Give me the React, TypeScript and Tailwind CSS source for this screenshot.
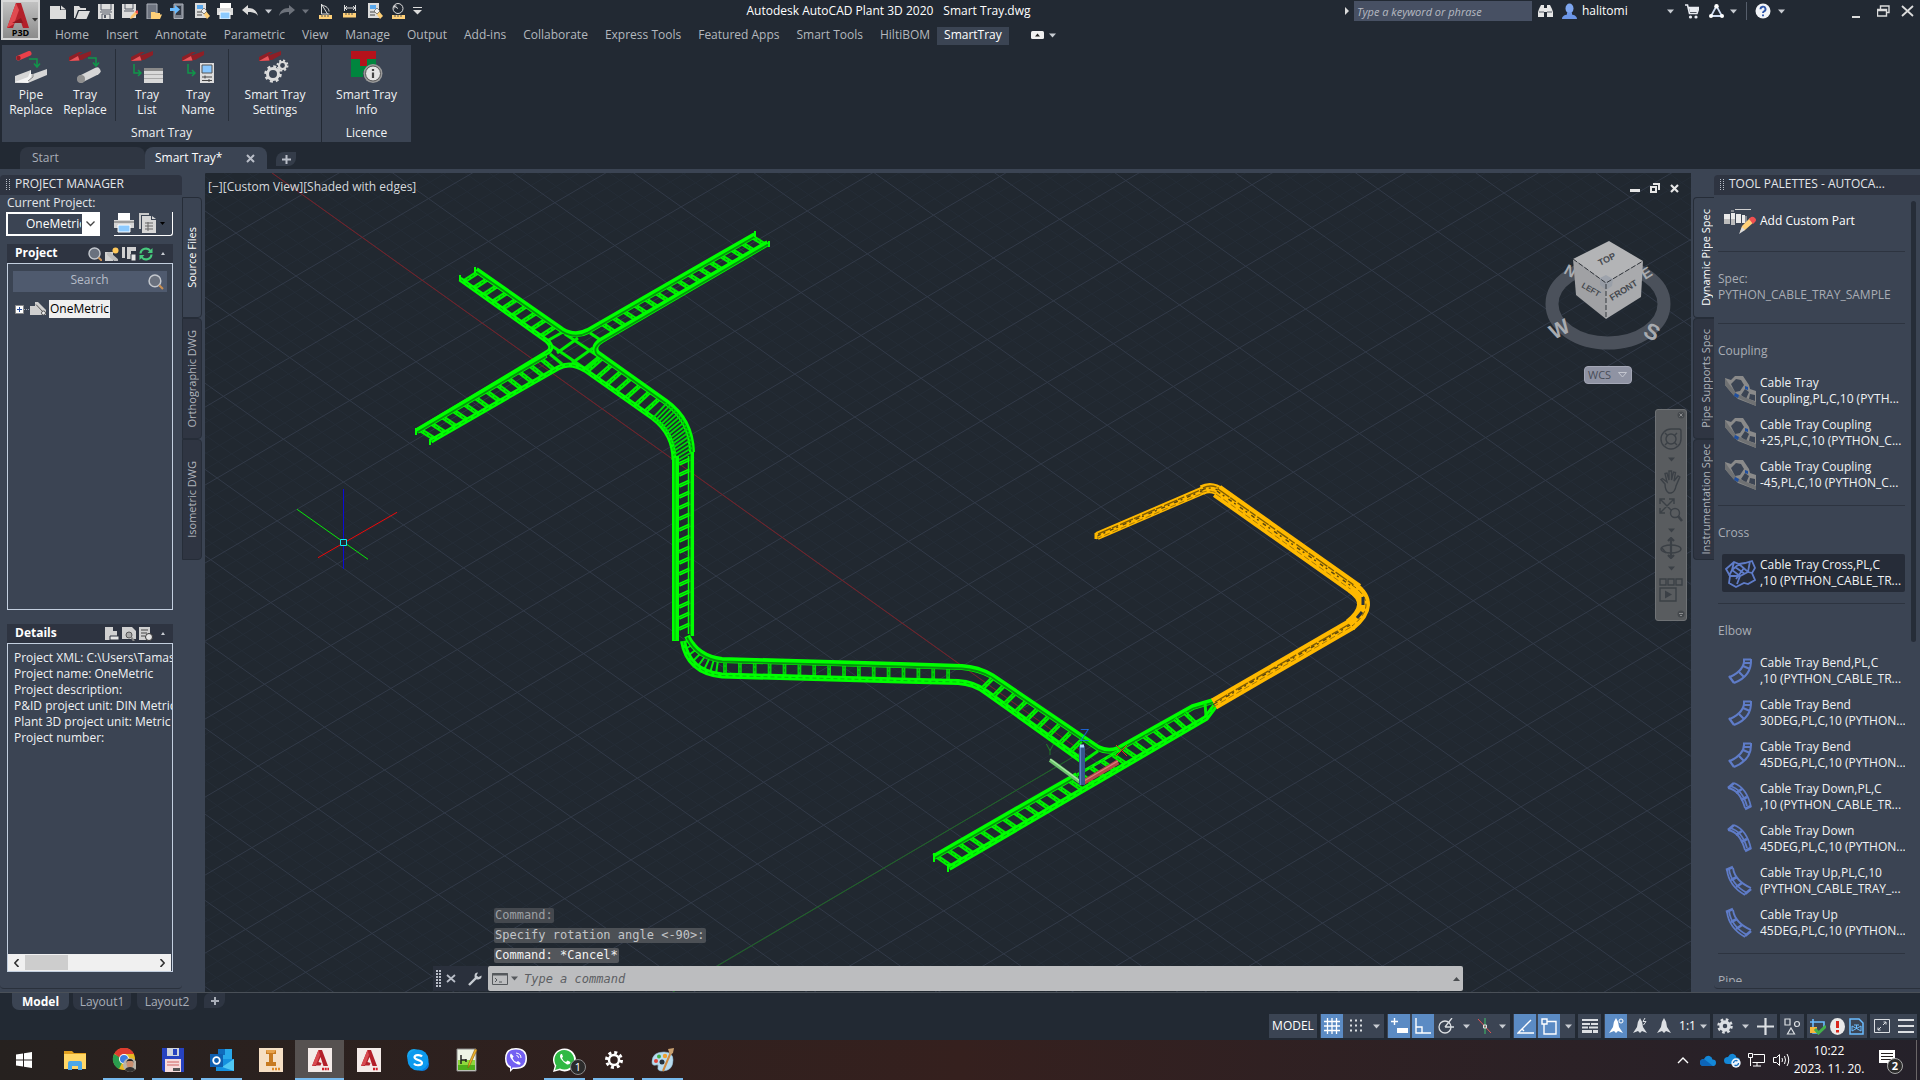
import React from "react";

type P = [number, number];

/* ---------- shared bits ---------- */

function Svg({ w, h, vb, children, className = "" }: { w: number; h: number; vb?: string; children: React.ReactNode; className?: string }) {
  return (
    <svg width={w} height={h} viewBox={vb ?? `0 0 ${w} ${h}`} className={`shrink-0 ${className}`} fill="none" aria-hidden="true">
      {children}
    </svg>
  );
}

function Caret({ color = "#c8ccd2", className = "" }: { color?: string; className?: string }) {
  return (
    <Svg w={7} h={5} className={className}>
      <path d="M0 0.5h7L3.500 4.500z" fill={color} />
    </Svg>
  );
}

function Grip() {
  return (
    <Svg w={4} h={11}>
      {[0, 2, 4, 6, 8, 10].map((y) => (
        <path key={y} d={`M0 ${y + 0.5}h1M3 ${y + 0.5}h1`} stroke="#b9bec8" />
      ))}
    </Svg>
  );
}

/* ---------- title bar ---------- */

const quickIcons: { label: string; gap: string; art: React.ReactNode }[] = [
  { label: "New", gap: "ml-[9px]", art: <path d="M0 3h10v4h6v9H0zM11 2.500l5 4h-5z" fill="#dcdcdc" /> },
  { label: "Open", gap: "ml-2", art: <path d="M0 15V3h5l1.500 2H12v2H4L1 15zM2 16L5 8h11l-3.500 8z" fill="#dcdcdc" /> },
  { label: "Save", gap: "ml-2", art: <><path d="M0 1h16v15H0z" fill="#dcdcdc" /><path d="M3 1v6h10V1M4 16v-5h8v5M2 9h12" stroke="#555b66" /><path d="M6 12h2v3H6z" fill="#555b66" /></> },
  { label: "Save As", gap: "ml-2", art: <><path d="M0 1h14v14H0z" fill="#dcdcdc" /><path d="M3 1v5h8V1M2 8h10" stroke="#555b66" /><path d="M8 16l1-3 5-5 2 2-5 5z" fill="#ffc46b" /><path d="M13 9l2-2 2 2-1.500 2z" fill="#f0504c" /></> },
  { label: "Open from mobile", gap: "ml-2", art: <><path d="M1 1h10v15H1z" fill="#6e7480" stroke="#aeb3bc" /><path d="M5 16V9h4l1 1h4v1.500H16L14 16z" fill="#ffd078" /></> },
  { label: "Save to mobile", gap: "ml-2", art: <><path d="M4 1h9v14.500H4z" fill="#7a808b" stroke="#aeb3bc" /><path d="M6 3h5v9H6z" fill="#333a46" /><path d="M0 5h5V2l5 4.500-5 4.500V8H0z" fill="#6bbcff" /></> },
  { label: "Batch plot", gap: "ml-2", art: <><path d="M1 0h11v15H1z" fill="#dcdcdc" /><path d="M3 2h6v4H3z" fill="#5aa9ee" /><path d="M3 9h5M3 12h5" stroke="#444" /><path d="M8 9l3-2 5 6-3 3z" fill="#ffd078" /><path d="M7 8l3-3 3 3-3 3z" fill="#eee" stroke="#444" strokeWidth=".6" /></> },
  { label: "Plot", gap: "ml-[7px]", art: <><path d="M3 0h11v5H3z" fill="#fff" /><path d="M0 5h16v7H0z" fill="#dcdcdc" /><path d="M3 9h10v7H3z" fill="#8ccaff" stroke="#fff" /></> },
  { label: "Undo", gap: "ml-[9px]", art: <path d="M0 7l6-5v3c6 0 9 3 10 8-2-3-5-4-10-4v3z" fill="#dcdcdc" /> },
];

const quickIcons2: { label: string; art: React.ReactNode }[] = [
  { label: "Angle", art: <><path d="M2.500 1v10h8M2.500 1l6 10M3 2.500c4 0 7 3 7 6" stroke="#dcdcdc" /><path d="M0 12h13v4H0z" fill="#ffd078" /><path d="M3 12v2M6 12v2M9 12v2" stroke="#555" /></> },
  { label: "Distance", art: <><path d="M1.500 2v6M12.500 2v6M2 5h10M4 3L2 5l2 2M10 3l2 2-2 2" stroke="#dcdcdc" /><path d="M0 10h13v4.500H0z" fill="#ffd078" /><path d="M3 10v2M6 10v2M9 10v2" stroke="#555" /></> },
  { label: "Properties", art: <><path d="M1 0h11v15H1z" fill="#dcdcdc" /><path d="M3 2h6v4H3z" fill="#5aa9ee" /><path d="M3 9h5M3 12h5" stroke="#444" /><path d="M8 9l3-2 5 6-3 3z" fill="#ffd078" /><path d="M7 8l3-3 3 3-3 3z" fill="#eee" stroke="#444" strokeWidth=".6" /></> },
  { label: "Radius", art: <><circle cx="7" cy="5.500" r="5" stroke="#dcdcdc" /><path d="M7 5.500L3 3M3 3v2.500M3 3h2.500" stroke="#dcdcdc" /><path d="M1 12h13v4H1z" fill="#ffd078" /><path d="M4 12v2M7 12v2M10 12v2" stroke="#555" /></> },
];

function TitleBar() {
  return (
    <div className="flex h-[22px] items-center">
      <div className="flex items-center pl-[41px]">
        {quickIcons.map((q) => (
          <button key={q.label} aria-label={q.label} className={`${q.gap}`}>
            <Svg w={16} h={16}>{q.art}</Svg>
          </button>
        ))}
        <Caret className="ml-[7px]" />
        <button aria-label="Redo" className="ml-[7px]">
          <Svg w={16} h={16}><path d="M16 7l-6-5v3C4 5 1 8 0 13c2-3 5-4 10-4v3z" fill="#6d727b" /></Svg>
        </button>
        <Caret color="#6d727b" className="ml-[7px]" />
        <div className="ml-[10px] flex gap-2">
          {quickIcons2.map((q) => (
            <button key={q.label} aria-label={q.label}>
              <Svg w={16} h={16}>{q.art}</Svg>
            </button>
          ))}
        </div>
        <button aria-label="Customize" className="ml-[6px]">
          <Svg w={9} h={8}><path d="M0 .5h9" stroke="#dcdcdc" /><path d="M0 3h9L4.500 7.500z" fill="#dcdcdc" /></Svg>
        </button>
      </div>
      <div className="flex flex-1 justify-center gap-[10px] pl-[10px] text-white">
        <span>Autodesk AutoCAD Plant 3D 2020</span>
        <span>Smart Tray.dwg</span>
      </div>
      <div className="flex items-center">
        <Svg w={4} h={8}><path d="M0 0l4 4-4 4z" fill="#dcdcdc" /></Svg>
        <input aria-label="Search help" placeholder="Type a keyword or phrase" className="ml-[5px] h-5 w-[178px] bg-[#475063] px-[3px] text-[11px] italic text-white outline-none placeholder:text-[#b6bac2]" />
        <Svg w={15} h={16} className="ml-[6px]">
          <path d="M1 6l2-4h3v12H0V9zM14 6l-2-4H9v12h6V9zM6 5h3v4H6z" fill="#e6e6e6" /><path d="M1 9h5M9 9h5" stroke="#555b66" />
        </Svg>
        <Svg w={15} h={16} className="ml-[9px]">
          <ellipse cx="7.500" cy="5.500" rx="4" ry="5" fill="#7ea6f0" /><path d="M0 16c0-3 3-4 5-4.500v-2h5v2c2 .5 5 1.500 5 4.500z" fill="#6c96e8" />
        </Svg>
        <span className="ml-[5px] w-[84px] text-white">halitomi</span>
        <Caret className="ml-px" />
        <Svg w={14} h={15} className="ml-[11px]">
          <path d="M0 1h2.500l2 8.500H12L14 3.500H3.500" stroke="#e9ecf2" strokeWidth="1.600" /><path d="M4 4h9.500l-1.500 4H5z" fill="#e9ecf2" /><circle cx="5.500" cy="13" r="1.600" fill="#e9ecf2" /><circle cx="11" cy="13" r="1.600" fill="#e9ecf2" />
        </Svg>
        <Svg w={15} h={14} className="ml-[10px]">
          <path d="M7.500 2L2 12h11z" stroke="#cfdcf2" strokeWidth="1.800" /><circle cx="7.500" cy="2.200" r="2.200" fill="#fff" /><circle cx="2" cy="12" r="2" fill="#fff" /><circle cx="13" cy="12" r="2" fill="#fff" />
        </Svg>
        <Caret className="ml-[6px]" />
        <div className="ml-[9px] h-[18px] w-px bg-[#565e6b]" />
        <Svg w={16} h={16} className="ml-2">
          <circle cx="8" cy="8" r="7.500" fill="#f2f4f8" /><path d="M5.500 6.200a2.500 2.500 0 1 1 3.600 2.200c-.8.4-1.100.8-1.100 1.600M8 11.500v1.800" stroke="#2e55a8" strokeWidth="1.900" />
        </Svg>
        <Caret className="ml-[7px]" />
        <button aria-label="Minimize" className="ml-[66px]"><Svg w={10} h={14}><path d="M1 13h8" stroke="#dcdcdc" strokeWidth="2" /></Svg></button>
        <button aria-label="Restore" className="ml-4"><Svg w={13} h={12}><path d="M3.500 4V1h8.500v6.500H9.500M.5 4.500h9v6.500h-9zM0 5.500h9" stroke="#dcdcdc" strokeWidth="1.400" /></Svg></button>
        <button aria-label="Close" className="ml-[11px] mr-[6px]"><Svg w={13} h={12}><path d="M1 1l11 10M12 1L1 11" stroke="#dcdcdc" strokeWidth="1.800" /></Svg></button>
      </div>
    </div>
  );
}

const menuTabs = ["Home", "Insert", "Annotate", "Parametric", "View", "Manage", "Output", "Add-ins", "Collaborate", "Express Tools", "Featured Apps", "Smart Tools", "HiltiBOM"];

function MenuTabs() {
  return (
    <nav className="flex h-[23px] items-end pl-[55px]">
      <div className="flex h-[18px] items-center gap-[17px] pb-[2px] text-[#b4b8be]">
        {menuTabs.map((t) => (
          <button key={t}>{t}</button>
        ))}
      </div>
      <button className="ml-[7px] h-[18px] bg-[#3b4453] px-[7px] pb-[2px] text-white">SmartTray</button>
      <button aria-label="Minimize ribbon" className="mb-[6px] ml-[22px] flex items-center gap-[5px]">
        <Svg w={13} h={8}><rect width="13" height="8" rx="1.500" fill="#f0f0f0" /><path d="M4 5.500L6.500 2.500 9 5.500z" fill="#222" /></Svg>
        <Caret />
      </button>
    </nav>
  );
}

/* ---------- ribbon ---------- */

const redTray = (
  <>
    <path d="M0 10V6L10 1h4l-5 3 2-.200V9.500z" fill="#8e1f26" />
    <path d="M9 9l2-5L22 0v4L13 9z" fill="#8e1f26" />
    <path d="M0 10l9-5 1.500 4.500z" fill="#e8575c" />
  </>
);
const greenArrow = <path d="M14 8h8v8M19 12.500l3 3.500 3-3.500" stroke="#10964a" strokeWidth="1.500" />;
const greenArrow2 = <path d="M3 13v9h7M7 19l3 3-3 3" stroke="#10964a" strokeWidth="1.500" />;

const art = {
  pipe: (
    <>
      <path d="M3.500 7L14 2.500" stroke="#e9404a" strokeWidth="5" strokeLinecap="round" /><circle cx="3.500" cy="7" r="2.200" fill="#8e1f26" />
      {greenArrow}
      <path d="M0 31v-6l16-6v4h2l14-5v6L13 32H0z" fill="#d6d6d6" /><path d="M0 31l13-5 3-7v7l-3 6z" fill="#f4f4f4" /><path d="M18 23v3l-5 4" stroke="#888" />
    </>
  ),
  tray: (
    <>
      {redTray}
      <path d="M19 7h8v8M24 11.500l3 3.500 3-3.500" stroke="#10964a" strokeWidth="1.500" />
      <path d="M12 28l16-8" stroke="#d6d6d6" strokeWidth="7" strokeLinecap="round" /><circle cx="12" cy="28" r="4" fill="#8f8f8f" />
    </>
  ),
  list: (
    <>
      {redTray}{greenArrow2}
      <path d="M13 17h19v15H13z" fill="#d9d9d9" /><path d="M13 17h19v3H13z" fill="#8a8a8a" /><path d="M13 23.500h19M13 27.500h19" stroke="#a9a9a9" />
    </>
  ),
  name: (
    <>
      {redTray}
      <path d="M6 13v9h7M10 19l3 3-3 3" stroke="#10964a" strokeWidth="1.500" />
      <path d="M18 12h14v20H18z" fill="#dcdcdc" /><path d="M20 14h10v8H20z" fill="#86c6ff" stroke="#555" /><path d="M20 26h10M20 29.500h10M23 24.500v3M27 28v3" stroke="#444" />
    </>
  ),
  settings: (
    <>
      {redTray}
      <circle cx="14" cy="23" r="5.500" stroke="#dcdcdc" strokeWidth="3" /><circle cx="14" cy="23" r="7.500" stroke="#dcdcdc" strokeWidth="2.500" strokeDasharray="3 2.890" />
      <circle cx="23.500" cy="14.500" r="3.500" stroke="#dcdcdc" strokeWidth="2.200" /><circle cx="23.500" cy="14.500" r="5" stroke="#dcdcdc" strokeWidth="2" strokeDasharray="2 1.920" />
    </>
  ),
  info: (
    <>
      <path d="M0 8h9v7h3v-7h13v12H12v6H0z" fill="#00853e" /><path d="M0 0h25v8h-9v7H9V8H0z" fill="#b5121b" />
      <circle cx="22" cy="22.500" r="9.500" fill="#9a9a9a" /><circle cx="22" cy="22.500" r="7.500" fill="#e4e4e4" stroke="#555" />
      <path d="M22 18v2M22 21.500V27" stroke="#444" strokeWidth="2.200" />
    </>
  ),
};

function RibbonButton({ icon, a, b, w }: { icon: React.ReactNode; a: string; b: string; w: string }) {
  return (
    <button className={`flex ${w} flex-col items-center pt-[6px] leading-[15px] text-[#f0f2f4]`}>
      <Svg w={32} h={32} className="mb-[4px]">{icon}</Svg>
      <span>{a}</span>
      <span>{b}</span>
    </button>
  );
}

function Ribbon() {
  const sep = <div className="mt-1 h-[72px] w-px bg-[#272e39]" />;
  return (
    <div className="flex h-[97px] gap-px pl-[2px]">
      <section className="flex flex-col justify-between bg-[#3b4453] pb-[1px]">
        <div className="flex">
          <RibbonButton icon={art.pipe} a="Pipe" b="Replace" w="w-[58px]" />
          <RibbonButton icon={art.tray} a="Tray" b="Replace" w="w-[50px] mr-[5px]" />
          {sep}
          <RibbonButton icon={art.list} a="Tray" b="List" w="w-[62px]" />
          <RibbonButton icon={art.name} a="Tray" b="Name" w="w-[40px] mr-[10px]" />
          {sep}
          <RibbonButton icon={art.settings} a="Smart Tray" b="Settings" w="w-[92px]" />
        </div>
        <h2 className="text-center text-[#f0f2f4]">Smart Tray</h2>
      </section>
      <section className="flex flex-col justify-between bg-[#3b4453] pb-[1px]">
        <RibbonButton icon={art.info} a="Smart Tray" b="Info" w="w-[89px]" />
        <h2 className="text-center text-[#f0f2f4]">Licence</h2>
      </section>
    </div>
  );
}

function FileTabs() {
  return (
    <div className="mt-[5px] flex h-[22px] items-end pl-5">
      <button className="h-[22px] w-[125px] rounded-t-[8px] bg-[#2f3642] pl-3 text-left text-[#a9aeb8]">Start</button>
      <div className="flex h-[22px] w-[122px] items-center justify-between rounded-t-[8px] bg-[#3b4453] pl-[10px] pr-3">
        <button className="text-white">Smart Tray*</button>
        <button aria-label="Close tab"><Svg w={9} h={9}><path d="M1 1l7 7M8 1L1 8" stroke="#b9bec8" strokeWidth="2" /></Svg></button>
      </div>
      <button aria-label="New tab" className="mb-[3px] ml-[9px] flex h-[14px] w-[20px] items-center justify-center rounded-br-[8px] rounded-tl-[8px] bg-[#343c49]">
        <Svg w={9} h={9}><path d="M4.500 0v9M0 4.500h9" stroke="#b9bec8" strokeWidth="2" /></Svg>
      </button>
    </div>
  );
}

/* ---------- project manager ---------- */

function SideTab({ label, active = false, side }: { label: string; active?: boolean; side: "l" | "r" }) {
  return (
    <button
      className={`flex h-[121px] items-center justify-center border border-[#262d38] text-[11px] ${side === "l" ? "w-[20px] rounded-r-[4px]" : "w-[21px] rounded-l-[4px] border-r-0 pl-[3px]"} ${active ? "bg-[#3b4453] text-white" : "bg-[#2f3542] text-[#b0b4bc]"}`}
    >
      <span className="rotate-180 whitespace-nowrap leading-[16px] [writing-mode:vertical-rl]">{label}</span>
    </button>
  );
}

const magnifier = <><circle cx="6.500" cy="6.500" r="5.500" stroke="#c4c8ce" strokeWidth="1.400" fill="#6a717e" /><path d="M10.500 10.500l3.500 3.500" stroke="#c98f52" strokeWidth="2" /></>;
const docPath = "M0 0h8v4h4v9H0z";

function BoxHead({ title, children }: { title: string; children: React.ReactNode }) {
  return (
    <div className="flex h-[19px] items-center justify-between bg-[#2e3441] pl-2 pr-2">
      <h3 className="pb-px font-bold text-white">{title}</h3>
      <div className="flex items-center gap-[3px]">
        {children}
        <Svg w={4} h={3} className="ml-[5px]"><path d="M0 3l2-3 2 3z" fill="#c8ccd2" /></Svg>
      </div>
    </div>
  );
}

const details = ["Project XML: C:\\Users\\Tamas\\", "Project name: OneMetric", "Project description:", "P&ID project unit: DIN Metric", "Plant 3D project unit: Metric", "Project number:"];

function ProjectManager() {
  return (
    <aside className="flex w-[205px] shrink-0 pt-[6px]">
      <div className="flex w-[182px] flex-col">
        <header className="flex h-5 shrink-0 items-center gap-[5px] rounded-t-[4px] bg-[#2e3441] pb-[2px] pl-[6px] text-[#e3e6ea]">
          <Grip />
          <h2>PROJECT MANAGER</h2>
        </header>
        <div className="mb-[3px] flex min-h-0 flex-1 flex-col rounded-b-[4px] border-b border-[#2a313c] pb-4 pl-[7px] pr-[9px]">
          <label htmlFor="project" className="leading-[15px] text-[#e3e6ea]">Current Project:</label>
          <div className="mt-[2px] flex justify-between">
            <div className="relative -ml-px h-6 w-[94px] border-2 border-white bg-[#3b4453]">
              <select id="project" className="h-full w-[73px] appearance-none bg-transparent pl-[18px] text-white outline-none">
                <option>OneMetric</option>
              </select>
              <div className="pointer-events-none absolute inset-y-0 right-0 flex w-[16px] items-center justify-center bg-white">
                <Svg w={9} h={6}><path d="M.5.500l4 4 4-4" stroke="#444" strokeWidth="1.300" /></Svg>
              </div>
            </div>
            <div className="flex h-6 w-[59px] items-center rounded-br-[3px] border-b border-r border-white pb-px">
              <button aria-label="Print"><Svg w={20} h={20} ><path d="M4 0h12v7H4z" fill="#fff" /><path d="M0 7h20v8H0z" fill="#d6d6d6" /><path d="M0 9h20" stroke="#666" /><path d="M4 12h12v7H4z" fill="#8ccaff" stroke="#fff" /></Svg></button>
              <button aria-label="Reports" className="ml-[5px] flex items-center gap-1">
                <Svg w={17} h={20}><path d="M0 0h10v2H2v14H0z" fill="#c9c9c9" /><path d="M3 3h9v4h5v13H3z" fill="#d6d6d6" /><path d="M13 3l4 3h-4z" fill="#d6d6d6" /><path d="M6 10h8M6 13h8M6 16h8M9 9v9" stroke="#666" /></Svg>
                <Svg w={5} h={3}><path d="M0 0h5L2.500 3z" fill="#000" /></Svg>
              </button>
            </div>
          </div>
          <div className="mt-2 flex min-h-0 flex-[366_1_0%] flex-col">
            <BoxHead title="Project">
              <Svg w={14} h={14}>{magnifier}</Svg>
              <Svg w={14} h={14}><path d="M0 5h8v9H0z" fill="#d0d0d0" /><path d="M4 7l7 6" stroke="#bbb" strokeWidth="4" strokeLinecap="round" /><circle cx="10.500" cy="3.500" r="3" fill="#ffc85a" /></Svg>
              <Svg w={14} h={14}><path d="M0 0h3v11H0zM5 0h9v4H9v8H5z" fill="#d0d0d0" /><path d="M9 7h5v7H9z" fill="#e6e6e6" stroke="#2e3441" /></Svg>
              <Svg w={14} h={14}><path d="M1.500 6.500A5.500 5.500 0 0 1 11.500 4M12.500 7.500A5.500 5.500 0 0 1 2.500 10" stroke="#47c97c" strokeWidth="2.200" /><path d="M13.500 1v5h-5zM.5 13V8h5z" fill="#47c97c" /></Svg>
            </BoxHead>
            <div className="flex-1 border border-[#c3cfdf] px-[5px] pt-[7px]">
              <div className="flex h-[21px] items-center bg-[#4f5a6e] pr-[3px]">
                <input aria-label="Search" placeholder="Search" className="min-w-0 flex-1 bg-transparent pb-[4px] pl-[18px] text-center text-white outline-none placeholder:text-[#b6bcc8]" />
                <Svg w={16} h={16} vb="0 0 15 15">{magnifier}</Svg>
              </div>
              <div className="mt-2 flex h-[18px] items-center pl-[2px]">
                <button aria-label="Expand"><Svg w={9} h={9}><path d="M.5.500h8v8h-8z" fill="#fff" stroke="#8a8a8a" /><path d="M2 4.500h5M4.500 2v5" stroke="#2a4f9e" /></Svg></button>
                <div className="w-[5px] border-t border-dotted border-[#a0a6b0]" />
                <Svg w={17} h={14} className="ml-px"><path d="M0 4h5v9H0zM5 0h3l8 8v5H5z" fill="#cfcfcf" /><path d="M6 2.500L14 11" stroke="#555" /><circle cx="13.500" cy="11" r="2" stroke="#555" fill="#eee" /></Svg>
                <button className="ml-[2px] h-[18px] bg-[#f0f0f0] px-px leading-[16px] text-black">OneMetric</button>
              </div>
            </div>
          </div>
          <div className="mt-[14px] flex min-h-0 flex-[348_1_0%] flex-col">
            <BoxHead title="Details">
              <Svg w={14} h={14}><path d={docPath} fill="#d0d0d0" /><path d="M5 9h9v4H5z" fill="#e6e6e6" stroke="#2e3441" /></Svg>
              <Svg w={14} h={14}><path d="M0 0h10l4 4v8H0z" fill="#d0d0d0" /><circle cx="7" cy="8" r="3" fill="#aaa" stroke="#555" /><path d="M9 10l3 4" stroke="#888" strokeWidth="2" /></Svg>
              <Svg w={14} h={14}><path d="M0 0h11v13H0z" fill="#d0d0d0" /><path d="M2 3h7M2 6h6M2 9h4" stroke="#444" /><circle cx="10" cy="10" r="3.500" fill="#e6e6e6" stroke="#333" /></Svg>
            </BoxHead>
            <div className="flex min-h-0 flex-1 flex-col justify-between overflow-hidden border border-[#c3cfdf]">
              <div className="pl-[6px] pt-[6px] leading-4 text-[#f0f2f4]">
                {details.map((d) => (
                  <p key={d} className="overflow-hidden whitespace-nowrap">{d}</p>
                ))}
              </div>
              <div className="mr-px flex h-[17px] items-center bg-[#f0f0f0]">
                <button aria-label="Scroll left" className="flex w-[17px] justify-center"><Svg w={5} h={8}><path d="M4.500 0L.8 4l3.700 4" stroke="#333" strokeWidth="1.600" /></Svg></button>
                <div className="h-[15px] w-[43px] bg-[#cdcdcd]" />
                <button aria-label="Scroll right" className="ml-auto flex w-[17px] justify-center"><Svg w={5} h={8}><path d="M.5 0l3.700 4L.5 8" stroke="#333" strokeWidth="1.600" /></Svg></button>
              </div>
            </div>
          </div>
        </div>
      </div>
      <div className="flex flex-col pt-[22px]">
        <SideTab label="Source Files" active side="l" />
        <SideTab label="Orthographic DWG" side="l" />
        <SideTab label="Isometric DWG" side="l" />
      </div>
    </aside>
  );
}

/* ---------- model canvas ---------- */

const lerp = (a: P, b: P, t: number): P => [a[0] + (b[0] - a[0]) * t, a[1] + (b[1] - a[1]) * t];

function gridPoint(i: number, j: number): P {
  const w = 1 + 0.0000033 * i + 0.0001056 * j;
  return [(296 + 60.017 * i + 66.337 * j) / w, (276 + 42.876 * i - 38.703 * j) / w];
}

function gridLines(major: boolean): string {
  let d = "";
  for (let k = -90; k <= 170; k++) {
    if ((k % 5 === 0) !== major) continue;
    const v = k / 5;
    const [a, b] = [gridPoint(-20, v), gridPoint(40, v)];
    const [c, e] = [gridPoint(v, -30), gridPoint(v, 30)];
    d += `M${a[0].toFixed(1)} ${a[1].toFixed(1)}L${b[0].toFixed(1)} ${b[1].toFixed(1)}`;
    d += `M${c[0].toFixed(1)} ${c[1].toFixed(1)}L${e[0].toFixed(1)} ${e[1].toFixed(1)}`;
  }
  return d;
}

function Rungs({ a, b, n, color = "#00f000", w = 4.6 }: { a: [P, P]; b: [P, P]; n: number; color?: string; w?: number }) {
  let d = "";
  for (let k = 0; k < n; k++) {
    const t = (k + 0.2) / n;
    const p = lerp(a[0], a[1], t);
    const q = lerp(b[0], b[1], t);
    d += `M${p[0].toFixed(1)} ${p[1].toFixed(1)}L${q[0].toFixed(1)} ${q[1].toFixed(1)}`;
  }
  return (
    <>
      <path d={d} stroke={color} strokeWidth={w} />
      <path d={d} stroke="#0a8a12" strokeWidth="0.900" strokeDasharray="3 2" />
    </>
  );
}

function Rail({ d, w = 6, inner = true }: { d: string; w?: number; inner?: boolean }) {
  return (
    <>
      <path d={d} stroke="#00ff00" strokeWidth={w} />
      {inner && <path d={d} stroke="#07920f" strokeWidth="1.800" transform="translate(0 1.500)" />}
      {!inner && <path d={d} stroke="#07a010" strokeWidth="0.700" strokeDasharray="4 3" />}
    </>
  );
}

const bendRungs = (() => {
  let d = "";
  for (let k = 0; k < 16; k++) {
    const t = k / 15;
    const u = 1 - t;
    const x1 = u * u * 667 + 2 * u * t * 691 + t * t * 692;
    const y1 = u * u * 403 + 2 * u * t * 420 + t * t * 452;
    const x2 = u * u * 652 + 2 * u * t * 674 + t * t * 675;
    const y2 = u * u * 419 + 2 * u * t * 433 + t * t * 462;
    d += `M${x1.toFixed(1)} ${y1.toFixed(1)}L${x2.toFixed(1)} ${y2.toFixed(1)}`;
  }
  return d;
})();

const uprightRungs = Array.from({ length: 16 }, (_, k) => `M679 ${464 + k * 11}L690 ${459 + k * 11}`).join("");

function YellowRun({ d, w }: { d: string; w: number }) {
  return (
    <>
      <path d={d} stroke="#ffb900" strokeWidth={w} strokeLinejoin="round" />
      <path d={d} stroke="#7d5c06" strokeWidth="1.400" strokeDasharray="14 1 7 2" transform="translate(1 -2)" />
      <path d={d} stroke="#5b460f" strokeWidth="1.400" strokeDasharray="4 3 2 5" />
      <path d={d} stroke="#a87c08" strokeWidth="1" strokeDasharray="6 3" transform="translate(-1 3)" />
    </>
  );
}

function ModelDrawing() {
  return (
    <svg viewBox="205 173 1486 819" preserveAspectRatio="xMidYMin slice" className="absolute inset-0 h-full w-full" fill="none" role="img" aria-label="Cable tray model">
      <path d={gridLines(false)} stroke="#252d37" strokeWidth="1" />
      <path d={gridLines(true)} stroke="#323a48" strokeWidth="1" />
      <path d="M272 173L1082 751.700" stroke="#7a1f26" strokeWidth="1" />
      <path d="M1082 751.700L673 992" stroke="#1e6a24" strokeWidth="1" />

      {/* crossing and its four arms */}
      <Rungs a={[[755, 236], [594, 329]]} b={[[768, 244], [606, 337]]} n={15} />
      <Rungs a={[[476, 271], [563, 332]]} b={[[462, 280], [548, 342]]} n={9} />
      <Rungs a={[[418, 431], [550, 354]]} b={[[432, 440], [562, 364]]} n={12} />
      <Rungs a={[[600, 357], [667, 404]]} b={[[586, 369], [653, 417]]} n={7} />
      <path d="M565 334L598 356M552 346L584 368M557 353L578 338M572 363L593 348M547 341L563 332M584 369L600 356M590 333L602 341M550 354L562 364" stroke="#00f000" strokeWidth="3" />
      <Rail d="M476 270L562 330Q575 338 588 331L755 235" />
      <Rail d="M460 279L547 341Q554 347 548 352L417 431" w={5} inner={false} />
      <Rail d="M417 431L546 355" w={6} />
      <Rail d="M768 243L602 340Q592 346 597 353L666 402Q691 420 692 452" w={6} />
      <Rail d="M431 441L558 368Q570 361 585 370L653 418Q674 434 674 460" w={5} inner={false} />
      <path d="M475 267v6M460 275v6M755 231v6M769 241v6M416 428v7M430 439v6" stroke="#00ff00" strokeWidth="2" />
      <path d={bendRungs} stroke="#00d808" strokeWidth="1.900" />

      {/* upright run */}
      <path d={uprightRungs} stroke="#00ff00" strokeWidth="3.600" />
      <path d={uprightRungs} stroke="#07920f" strokeWidth="0.700" />
      <path d="M675.500 456V641" stroke="#00ff00" strokeWidth="7" />
      <path d="M675 458V640" stroke="#07a010" strokeWidth="0.800" />
      <path d="M688.500 456V634" stroke="#00ff00" strokeWidth="1.500" />
      <path d="M690 456V634" stroke="#0a7a12" strokeWidth="1" />
      <path d="M692.300 452V636" stroke="#00ff00" strokeWidth="3.500" />

      {/* lower bend and horizontal run */}
      <path d="M686 642l5-4M687 648l8-5M689 655l9-7M693 661l9-9M698 666l8-11M704 670l6-13M710 673l4-14M716 674l2-14" stroke="#00e808" strokeWidth="2" />
      <Rungs a={[[722, 662], [960, 669]]} b={[[722, 675], [960, 681]]} n={16} w={3.8} color="#00d008" />
      <Rail d="M687 636Q697 657 722 660L900 665L962 667Q978 668 992 676L1098 748Q1108 753 1118 749L1193 707L1213 701" w={6} />
      <Rail d="M683 641Q688 672 722 675.500L900 680.500L958 682Q974 683 986 692L1081 760" w={6} inner={false} />
      <Rungs a={[[990, 677], [1090, 747]]} b={[[981, 686], [1080, 757]]} n={9} />

      {/* tee and lower run */}
      <Rungs a={[[935, 858], [1122, 750]]} b={[[948, 867], [1135, 759]]} n={17} />
      <Rungs a={[[1122, 750], [1193, 708]]} b={[[1135, 759], [1204, 719]]} n={7} />
      <path d="M1081 763L1098 751M1205 703L1206 716" stroke="#00f000" strokeWidth="3" />
      <Rail d="M934 857L1077 775" w={6} />
      <Rail d="M1077 775L1120 750" w={3} inner={false} />
      <Rail d="M949 868L1206 718L1215 706" w={6} inner={false} />
      <path d="M934 853v9M948 864v8" stroke="#00ff00" strokeWidth="2" />

      {/* yellow run */}
      <YellowRun d="M1097 536L1204 490" w={8} />
      <path d="M1096 533v6" stroke="#ffb900" strokeWidth="3" />
      <YellowRun d="M1202 490Q1212 485 1222 493" w={10} />
      <YellowRun d="M1217 491L1357 590" w={14} />
      <YellowRun d="M1214 704L1352 624" w={12} />
      <path d="M1352 587Q1376 604 1350 625" stroke="#ffb900" strokeWidth="13" />
      <path d="M1352 585Q1380 604 1352 626" stroke="#7d5c06" strokeWidth="1" strokeDasharray="5 3" />
      <path d="M1363 597v8M1362 612l-5 6" stroke="#28303a" strokeWidth="3" />

      {/* axes icon */}
      <path d="M1050 760L1080 782" stroke="#6cc46c" strokeWidth="4" />
      <path d="M1050 759L1080 781" stroke="#a8e8a4" strokeWidth="1.200" />
      <path d="M1118 762L1084 782" stroke="#b54848" strokeWidth="5" />
      <path d="M1118 761L1084 781" stroke="#d98080" strokeWidth="1.200" />
      <path d="M1082 746V785" stroke="#35568c" strokeWidth="6" />
      <path d="M1080.500 746V785" stroke="#5f86c4" strokeWidth="1.200" />
      <path d="M1080 744.500h4v3h-4z" fill="#a9dcff" />
      <path d="M1116 745l11 11M1127 745l-11 11" stroke="#e0301c" strokeWidth="1" />
      <text x="1080" y="741" fontSize="17" fill="#1f6fe8" fontFamily="Open Sans, sans-serif" fontWeight="300">Z</text>
      <text x="1046" y="755" fontSize="15" fill="#1f8a28" fontFamily="Open Sans, sans-serif" fontWeight="300">Y</text>

      {/* crosshair */}
      <path d="M343.500 489v80" stroke="#0a0ad8" />
      <path d="M318 557.700L397 512.300" stroke="#f00808" />
      <path d="M297 509.300L368 559.300" stroke="#08e808" />
      <path d="M340.500 539.500h6v6h-6z" fill="#212830" stroke="#10e8f0" />
    </svg>
  );
}

function ViewCube() {
  return (
    <svg width="128" height="114" viewBox="1544 238 128 114" fill="none" role="img" aria-label="View cube">
      <ellipse cx="1608" cy="304" rx="56" ry="39" stroke="#4b515b" strokeWidth="13" />
      <g fill="#a8abb0" fontFamily="Liberation Sans, Arial, sans-serif" fontWeight="bold">
        <text x="0" y="0" fontSize="21" transform="translate(1554 340) rotate(-28)">W</text>
        <text x="0" y="0" fontSize="22" transform="translate(1642 335) rotate(28)">S</text>
        <text x="0" y="0" fontSize="15" transform="translate(1563 273) rotate(28)">N</text>
        <text x="0" y="0" fontSize="15" transform="translate(1645 280) rotate(-32)">E</text>
      </g>
      <path d="M1609 241L1643 261L1606 283L1573 259z" fill="#b3b4b6" />
      <path d="M1573 259L1606 283V319L1576 295z" fill="#a0a1a4" />
      <path d="M1606 283L1643 261L1641 297L1606 319z" fill="#a9aaad" />
      <path d="M1600 278l6-3 7 4-1 7-6 4-6-5z" fill="#8f97a5" opacity=".6" />
      <path d="M1573 259L1606 283L1643 261M1606 284V318" stroke="#33373d" strokeDasharray="5 2" />
      <g fill="#45494f" fontFamily="Liberation Sans, Arial, sans-serif" fontWeight="bold">
        <text x="0" y="0" fontSize="9" transform="translate(1600 266) rotate(-26)">TOP</text>
        <text x="0" y="0" fontSize="8" transform="translate(1581 287) rotate(30)">LEFT</text>
        <text x="0" y="0" fontSize="9" transform="translate(1612 301) rotate(-32)">FRONT</text>
      </g>
    </svg>
  );
}

function NavBar() {
  const s = { stroke: "#3b4046", strokeWidth: 1.4 };
  return (
    <div className="flex h-[212px] w-[32px] flex-col items-center rounded-[3px] border border-[#6f7275] bg-[#595c5f] pb-[2px] pt-[1px]">
      <button aria-label="Close navigation bar" className="self-end pr-px"><Svg w={8} h={8}><circle cx="4" cy="4" r="3.500" fill="#45494d" /><path d="M2.500 2.500l3 3M5.500 2.500l-3 3" stroke="#8a8c8e" /></Svg></button>
      <button aria-label="Wheel" className="mt-[9px]"><Svg w={22} h={22}><path d="M11 1h8q2 0 2 2v8a10 10 0 1 1-10-10z" {...s} /><circle cx="11" cy="11" r="5" {...s} /><path d="M5 5l2.500 2.500M17 5l-2.500 2.500M5 17l2.500-2.500M17 17l-2.500-2.500" {...s} /></Svg></button>
      <Caret color="#3b4046" className="mt-[7px]" />
      <button aria-label="Pan" className="mt-2"><Svg w={22} h={24}><path d="M5 14L1 9.500l1.500-1L7 12 5 3.500l2-.5 2 7V1h2.500v9l2-8 2 .5L14 11l4-5 1.800 1-3.800 9q-1 6-5 7H9q-4-2-4-9z" {...s} /></Svg></button>
      <button aria-label="Zoom" className="mt-[4px]"><Svg w={24} h={24}><path d="M1 1l14 14M15 1L1 15M1 6V1h5M10 1h5v5M1 10v5h5" {...s} /><circle cx="16" cy="15" r="4.500" {...s} fill="#595c5f" /><path d="M19 18l4 5" stroke="#3b4046" strokeWidth="2.500" /></Svg></button>
      <Caret color="#3b4046" className="mt-[6px]" />
      <button aria-label="Orbit" className="mt-1"><Svg w={22} h={22}><path d="M11 1v20M8 4l3-3 3 3M8 18l3 3 3-3" {...s} strokeWidth="2.200" /><ellipse cx="11" cy="12" rx="10" ry="4" {...s} /><path d="M2 11l4 5" {...s} /></Svg></button>
      <Caret color="#3b4046" className="mt-[7px]" />
      <button aria-label="Show motion" className="mt-[7px]"><Svg w={24} h={24}><path d="M1 1h6v6H1zM9 1h6v6H9zM17 1h6v6h-6zM1 10h16v13H1z" {...s} /><path d="M6 12.500l7 4-7 4z" fill="#3b4046" /></Svg></button>
      <button aria-label="Customize navigation bar" className="mt-auto self-end pr-px"><Svg w={8} h={8}><circle cx="4" cy="4" r="3.500" fill="#45494d" /><path d="M2 3.500h4M3 5.500h2" stroke="#8a8c8e" /></Svg></button>
    </div>
  );
}

function CommandLine() {
  return (
    <div className="absolute inset-x-[228px] bottom-px font-['DejaVu_Sans_Mono',monospace]">
      <div className="ml-[61px] flex flex-col items-start gap-[5px] leading-[15px]">
        <span className="rounded-[2px] bg-[#44484e] px-px text-[#9da0a4]">Command:</span>
        <span className="rounded-[2px] bg-[#4c5055] px-px text-[#c3c5c8]">Specify rotation angle &lt;-90&gt;:</span>
        <span className="rounded-[2px] bg-[#53565b] px-px text-[#f2f2f2]">Command: *Cancel*</span>
      </div>
      <div className="mt-[3px] flex h-[25px]">
        <div className="flex w-[55px] shrink-0 items-center bg-[#2a303c] pl-[3px]">
          <Svg w={5} h={17}>{[0, 3, 6, 9, 12, 15].map((y) => <path key={y} d={`M0 ${y + 1}h2M3 ${y + 1}h2`} stroke="#b9bec8" strokeWidth="2" />)}</Svg>
          <button aria-label="Close command line" className="ml-[5px]"><Svg w={10} h={9}><path d="M1 1l8 7M9 1L1 8" stroke="#b9bec8" strokeWidth="1.800" /></Svg></button>
          <button aria-label="Customize" className="ml-3"><Svg w={14} h={14}><path d="M1 13l7-7" stroke="#c8ccd2" strokeWidth="2.400" /><path d="M13.500 3.500a3.500 3.500 0 1 1-3.500-3l-1.500 3 2 1.500z" fill="#c8ccd2" /></Svg></button>
        </div>
        <div className="flex flex-1 items-center rounded-[2px] bg-[#bcbdbf] pl-1 pr-[3px]">
          <Svg w={16} h={12}><path d="M.5.500h15v11H.5z" stroke="#55585c" /><path d="M0 1.500h16" stroke="#55585c" strokeWidth="2" /><path d="M3 5l2 2-2 2M7 9h3" stroke="#55585c" /></Svg>
          <Caret color="#55585c" className="ml-[3px]" />
          <input aria-label="Command" placeholder="Type a command" className="ml-[6px] min-w-0 flex-1 bg-transparent text-[12px] italic text-black outline-none placeholder:text-[#5c5f63]" />
          <Svg w={7} h={4}><path d="M0 4l3.500-4L7 4z" fill="#4a4d50" /></Svg>
        </div>
      </div>
    </div>
  );
}

function Viewport() {
  return (
    <main className="relative mt-1 min-w-0 flex-1 overflow-hidden bg-[#212830]">
      <ModelDrawing />
      <div className="relative flex items-start justify-between pl-[3px] pr-3 pt-[6px] text-[#d6d9dd]">
        <div><button>[−]</button><button>[Custom View]</button><button>[Shaded with edges]</button></div>
        <div className="flex items-center gap-[10px] pt-1">
          <button aria-label="Minimize viewport"><Svg w={10} h={10}><path d="M0 7.500h10" stroke="#e6e6e6" strokeWidth="3" /></Svg></button>
          <button aria-label="Restore viewport"><Svg w={10} h={10}><path d="M3 0h7v7H8V2H3z" fill="#e6e6e6" /><path d="M1 4h5v5H1z" stroke="#e6e6e6" strokeWidth="2" /></Svg></button>
          <button aria-label="Close viewport"><Svg w={9} h={9}><path d="M1 1l7 7M8 1L1 8" stroke="#e6e6e6" strokeWidth="2.200" /></Svg></button>
        </div>
      </div>
      <div className="absolute right-[19px] top-[65px] flex w-[128px] flex-col items-center">
        <ViewCube />
        <button className="mt-[14px] flex h-[18px] w-12 items-center justify-between rounded-[4px] border border-[#a4a7b6] bg-[#8f93a3] pb-px pl-[3px] pr-1 text-[11px] text-[#484d58]">
          WCS
          <Svg w={9} h={6}><path d="M.5.500h8L4.500 5z" stroke="#c3c6cf" /></Svg>
        </button>
      </div>
      <div className="absolute right-1 top-[236px]"><NavBar /></div>
      <CommandLine />
    </main>
  );
}

/* ---------- tool palettes ---------- */

const blue = "#5f7cc8";
const partArt = {
  coupling: (
    <>
      <path d="M1 3l6 2 4-4h8l6 9 1 4 6 2v15L14 24 6 16 1 10z" fill="#8a8a8a" />
      <path d="M7 9l5-5 5 1 3 5-4 6-5 1zM17 20l4-6 4 3-3 7zM26 19l5 1v6l-6-2z" fill="#3b4453" />
      <path d="M1 3v7l9 11 22 10v-4L13 19 5 9z" fill="#6f7173" />
      <path d="M11 18l4 2-1 3-4-2zM21 11l3 1v3l-3-1z" fill="#1f4fa0" />
    </>
  ),
  cross: (
    <path d="M2 12l8-7 5 2 6-1 7-2 3 7-3 5 3 7-7 4-4-1-8 4-7-4 1-7zM10 5l-2 8 8 6-3 8M15 7L8 13l-3 6M15 7l9 8 4 1M26 4l-2 11-8 4-11 0M11 10l10 7M20 11l-8 11" stroke={blue} strokeWidth="1.800" />
  ),
  bend: (
    <>
      <path d="M20 4q1 11-14 18M27 4q1 17-17 24" stroke={blue} strokeWidth="2" /><path d="M19 4.500h8M19 11l7 3M15 17l5 5M5 21l5 7M19 8h8" stroke={blue} strokeWidth="2.200" />
    </>
  ),
  down: (
    <>
      <path d="M4 7q12 2 17 20M10 2q13 5 17 24M6 5q12 3 17 20" stroke={blue} strokeWidth="1.800" /><path d="M4 7l6-5M12 12l6-4M17 19l6-3M21 28l6-3" stroke={blue} strokeWidth="2.600" />
    </>
  ),
  up: (
    <>
      <path d="M3 5q2 16 18 25M9 3q2 13 18 20M5 4q2 15 18 24" stroke={blue} strokeWidth="1.800" /><path d="M2 5l7-3M7 15l6-3M12 22l6-4M21 29l6-5" stroke={blue} strokeWidth="2.600" />
    </>
  ),
};

type Kind = keyof typeof partArt;
const sections: { title: string; items: { kind: Kind; a: string; b: string; on?: boolean }[] }[] = [
  {
    title: "Coupling",
    items: [
      { kind: "coupling", a: "Cable Tray", b: "Coupling,PL,C,10 (PYTH..." },
      { kind: "coupling", a: "Cable Tray Coupling", b: "+25,PL,C,10 (PYTHON_C..." },
      { kind: "coupling", a: "Cable Tray Coupling", b: "-45,PL,C,10 (PYTHON_C..." },
    ],
  },
  { title: "Cross", items: [{ kind: "cross", a: "Cable Tray Cross,PL,C", b: ",10 (PYTHON_CABLE_TR...", on: true }] },
  {
    title: "Elbow",
    items: [
      { kind: "bend", a: "Cable Tray Bend,PL,C", b: ",10 (PYTHON_CABLE_TR..." },
      { kind: "bend", a: "Cable Tray Bend", b: "30DEG,PL,C,10 (PYTHON..." },
      { kind: "bend", a: "Cable Tray Bend", b: "45DEG,PL,C,10 (PYTHON..." },
      { kind: "down", a: "Cable Tray Down,PL,C", b: ",10 (PYTHON_CABLE_TR..." },
      { kind: "down", a: "Cable Tray Down", b: "45DEG,PL,C,10 (PYTHON..." },
      { kind: "up", a: "Cable Tray Up,PL,C,10", b: "(PYTHON_CABLE_TRAY_..." },
      { kind: "up", a: "Cable Tray Up", b: "45DEG,PL,C,10 (PYTHON..." },
    ],
  },
  { title: "Pipe", items: [] },
];

function ToolPalettes() {
  return (
    <aside className="flex w-[229px] shrink-0 pt-[6px]">
      <div className="ml-[2px] flex flex-col pt-[22px]">
        <SideTab label="Dynamic Pipe Spec" active side="r" />
        <SideTab label="Pipe Supports Spec" side="r" />
        <SideTab label="Instrumentation Spec" side="r" />
      </div>
      <div className="flex min-w-0 flex-1 flex-col">
        <header className="flex h-5 shrink-0 items-center gap-[5px] rounded-tl-[4px] bg-[#2e3441] pb-[2px] pl-[6px] text-[#e3e6ea]">
          <Grip />
          <h2>TOOL PALETTES - AUTOCA...</h2>
        </header>
        <div className="mb-[3px] flex min-h-0 flex-1 rounded-bl-[4px] border-b border-[#2a313c]">
          <div className="h-0 min-h-full w-[191px] overflow-hidden pl-1">
            <div className="h-[787px] max-h-full overflow-hidden">
              <button className="flex h-[56px] items-center gap-1 pb-1 pl-[6px] text-white">
                <Svg w={32} h={26}>
                  <path d="M0 6h6v10H0zM7 5h4v12H7zM12 6h5v9h-5zM18 7h3v8h-3z" fill="#e9e9e9" /><path d="M0 11h6v5H0zM7 11h4v6H7z" fill="#bcbcbc" /><path d="M7 3h3M11 1.500h16M22 8v8" stroke="#cfcfcf" />
                  <path d="M16 24l2-6 8-8 4 4-9 8z" fill="#ffd078" /><path d="M25 11l2-2q2-1 4 1t0 4l-2 2z" fill="#f05050" /><path d="M15 26l3-7 3 3z" fill="#ddd" />
                </Svg>
                Add Custom Part
              </button>
              <div className="border-t border-[#2d3440] pb-5 pt-[19px] text-[#a9adb5]">
                <p>Spec:</p>
                <p>PYTHON_CABLE_TRAY_SAMPLE</p>
              </div>
              {sections.map((s) => (
                <section key={s.title} className="border-t border-[#2d3440] pb-[11px] pt-[19px]">
                  <h3 className="text-[#a9adb5]">{s.title}</h3>
                  <div className="mt-[13px] flex flex-col gap-1">
                    {s.items.map((it) => (
                      <button key={it.a + it.b} className={`ml-1 flex h-[38px] items-center gap-1 rounded-[2px] pl-[2px] text-left text-[#f0f2f4] ${it.on ? "bg-[#262c38]" : ""}`}>
                        <Svg w={32} h={32}>{partArt[it.kind]}</Svg>
                        <span className="flex flex-col whitespace-nowrap">
                          <span>{it.a}</span>
                          <span>{it.b}</span>
                        </span>
                      </button>
                    ))}
                  </div>
                </section>
              ))}
            </div>
          </div>
          <div className="ml-[6px] mt-[6px] h-[441px] w-[5px] rounded-full bg-[#262d38]" />
        </div>
      </div>
    </aside>
  );
}

/* ---------- bottom bars ---------- */

function LayoutTabs() {
  return (
    <div className="flex h-[21px] shrink-0 items-start pl-3 text-[#a9aeb8]">
      <button className="h-[17px] w-[57px] rounded-b-[7px] bg-[#3b4453] font-bold text-white">Model</button>
      <button className="ml-[4px] h-[17px] w-[58px] rounded-b-[7px] bg-[#2e3542]">Layout1</button>
      <button className="ml-[6px] h-[17px] w-[60px] rounded-b-[7px] bg-[#2e3542]">Layout2</button>
      <button aria-label="New layout" className="ml-[7px] flex h-[15px] w-[21px] items-center justify-center rounded-br-[8px] rounded-tl-[6px] bg-[#2e3542]">
        <Svg w={8} h={8}><path d="M4 0v8M0 4h8" stroke="#a9aeb8" strokeWidth="2" /></Svg>
      </button>
    </div>
  );
}

function Cell({ label, w = "w-[23px]", on = false, gap = false, children }: { label: string; w?: string; on?: boolean; gap?: boolean; children: React.ReactNode }) {
  return (
    <button aria-label={label} className={`flex h-6 items-center justify-center ${w} ${gap ? "ml-[3px]" : ""} ${on ? "border-x border-[#3b4453] bg-[#5b8bc4]" : "bg-[#3b4453]"}`}>
      {children}
    </button>
  );
}

const person = "M8 0q3 4 3 9l4 6-5-2-2 2-2-2-5 2 4-6q0-5 3-9z";

function StatusBar() {
  const g = "#dcdfe3";
  return (
    <div className="flex h-[26px] shrink-0 items-start justify-end pr-[3px] text-white">
      <button className="h-6 w-12 bg-[#3b4453]">MODEL</button>
      <Cell label="Grid" on gap w="w-6"><Svg w={16} h={16}><path d="M3.500 0v16M8 0v16M12.500 0v16M0 3.500h16M0 8h16M0 12.500h16" stroke="#fff" strokeWidth="1.300" /></Svg></Cell>
      <Cell label="Snap" w="w-6"><Svg w={14} h={14}><path d="M1 1.500h12M1 6.500h12M1 11.500h12" stroke={g} strokeWidth="2" strokeDasharray="2 3" /></Svg></Cell>
      <Cell label="Snap menu" w="w-4"><Caret /></Cell>
      <Cell label="Dynamic input" on gap w="w-6"><Svg w={17} h={16}><path d="M3.500 0v7M0 3.500h7" stroke="#fff" strokeWidth="1.400" /><path d="M6 10h11v5H6z" fill="#fff" /></Svg></Cell>
      <Cell label="Ortho" on w="w-6"><Svg w={16} h={16}><path d="M1 0v15h15M1 9h6v6" stroke="#fff" strokeWidth="1.400" /></Svg></Cell>
      <Cell label="Polar"><Svg w={17} h={16}><circle cx="7" cy="9" r="6" stroke={g} strokeWidth="1.300" /><path d="M7 9h9M7 9l7-9" stroke={g} strokeWidth="1.300" /></Svg></Cell>
      <Cell label="Polar menu" w="w-4"><Caret /></Cell>
      <Cell label="Isometric drafting" w="w-5"><Svg w={15} h={16}><path d="M8 0v16" stroke="#3fbf6a" /><path d="M1 1l13 14" stroke="#e05555" /><path d="M6.500 7h3v3h-3z" stroke={g} /></Svg></Cell>
      <Cell label="Isometric menu" w="w-4"><Caret /></Cell>
      <Cell label="Tracking" on gap w="w-6"><Svg w={17} h={15}><path d="M14 1L1 14h16M5 10l2 2" stroke="#fff" strokeWidth="1.400" /></Svg></Cell>
      <Cell label="Object snap" on w="w-6"><Svg w={17} h={17}><path d="M1 1h5v5H1zM6 3.500h9V16H3V6" stroke="#fff" strokeWidth="1.400" /></Svg></Cell>
      <Cell label="Snap settings" w="w-[14px]"><Caret /></Cell>
      <Cell label="Lineweight" gap w="w-[23px]"><Svg w={16} h={14}><path d="M0 1h16M0 5h8M9 5h7M0 8.500h6M7 8.500h9" stroke={g} strokeWidth="2" /><path d="M0 12.500h10M11 12.500h5" stroke={g} strokeWidth="3" /></Svg></Cell>
      <Cell label="Annotation visibility" on gap w="w-6"><Svg w={16} h={16}><path d={person} fill="#fff" /><circle cx="13" cy="3" r="2" stroke="#fff" /></Svg></Cell>
      <Cell label="Auto scale" w="w-6"><Svg w={16} h={16}><path d={person} fill={g} /><path d="M13 0l-2 3.500h3L11.500 7" stroke={g} /></Svg></Cell>
      <Cell label="Annotation scale" w="w-6"><Svg w={16} h={16}><path d={person} fill={g} /></Svg></Cell>
      <button className="flex h-6 w-[34px] items-center justify-center gap-1 bg-[#3b4453]">1:1<Caret /></button>
      <Cell label="Workspace" gap w="w-6"><Svg w={16} h={16}><circle cx="8" cy="8" r="4" stroke={g} strokeWidth="3.500" /><circle cx="8" cy="8" r="6.500" stroke={g} strokeWidth="2.500" strokeDasharray="2.600 2.500" /></Svg></Cell>
      <Cell label="Workspace menu" w="w-4"><Caret /></Cell>
      <Cell label="Annotation monitor" w="w-6"><Svg w={17} h={17}><path d="M8.500 0v17M0 8.500h17" stroke={g} strokeWidth="2.200" /></Svg></Cell>
      <Cell label="Isolate objects" gap w="w-6"><Svg w={16} h={17}><path d="M1 1h5v6H1zM7 10l3.500 6h-7z" stroke={g} strokeWidth="1.200" /><circle cx="13" cy="6" r="2.500" stroke={g} strokeWidth="1.200" /></Svg></Cell>
      <div className="ml-[3px] flex h-6 items-center gap-1 bg-[#3b4453] px-[3px]">
        <Svg w={16} h={17}><path d="M3 1v14h6M0 4h14v5" stroke="#6bbcff" strokeWidth="1.600" /><path d="M0 9h7v6H0z" fill="#f6b73c" /><path d="M5 11l3.500 4L16 8" stroke="#43b04a" strokeWidth="3" /></Svg>
        <Svg w={15} h={17}><ellipse cx="7.500" cy="8.500" rx="7.500" ry="8.500" fill="#e9e9e9" /><path d="M7.500 3v7M7.500 12v2.500" stroke="#d9261c" strokeWidth="3" /></Svg>
        <Svg w={15} h={17}><path d="M1 1h9l4 4v11H1z" stroke="#6bbcff" strokeWidth="1.500" /><path d="M3 8v5l9-5v5zM7.500 10V7M5 7h5" stroke="#6bbcff" /></Svg>
      </div>
      <Cell label="Clean screen" gap w="w-6"><Svg w={16} h={14}><path d="M.5.500h15v13H.5z" stroke={g} /><path d="M9 6l3-3M9.500 3H12v2.500M7 8l-3 3M6.500 11H4V8.500" stroke={g} /></Svg></Cell>
      <Cell label="Customization"><Svg w={16} h={14}><path d="M0 1h16M0 7h16M0 13h16" stroke={g} strokeWidth="2" /></Svg></Cell>
    </div>
  );
}

const adsk = (bg: string) => (
  <>
    <path d="M0 0h24v24H0z" fill={bg} />
    <path d="M4 18L10.500 2h3.500L20 18h-4.500l-3-9-2 5 3 1-1 2.500H8.500l-.8 .5z" fill="#b3202a" />
    <path d="M4 18L10.500 2l1.500 5-4 10z" fill="#d84a50" />
  </>
);

const tasks: { label: string; run?: boolean; active?: boolean; art: React.ReactNode }[] = [
  { label: "File Explorer", art: <><path d="M1 3h8l2 2h12v4H1z" fill="#e0a020" /><path d="M1 6h22v15H1z" fill="#ffd766" /><path d="M5 22v-7q0-2 2-2h10q2 0 2 2v7h-4v-4H9v4z" fill="#4aa7e8" /></> },
  { label: "Chrome", run: true, art: <><circle cx="12" cy="11" r="11" fill="#e8b923" /><path d="M12 11L2.500 5.500A11 11 0 0 1 22 6H12z" fill="#dd3c2f" /><path d="M12 11L7 21A11 11 0 0 1 2 6z" fill="#2a9d4e" /><path d="M2.400 5.600A11 11 0 0 1 21.800 6H12a5 5 0 0 0-4.600 3.500z" fill="#dd3c2f" /><circle cx="12" cy="11" r="5" fill="#fff" /><circle cx="12" cy="11" r="4" fill="#3b7de0" /><circle cx="18" cy="17" r="7" fill="#b9b4a8" /><circle cx="18" cy="16" r="3.500" fill="#c98f70" /><path d="M14.500 15q0-4 3.500-4t3.500 4l-1-2h-5z" fill="#222" /><path d="M13 22q1-3 5-3t5 3q-5 4-10 0z" fill="#333" /></> },
  { label: "Total Commander", run: true, art: <><path d="M1 0h22v24H3l-2-2z" fill="#2743c0" /><path d="M6 0h12v8H6z" fill="#cfd4dd" /><path d="M12 1h4v6h-4z" fill="#2743c0" /><path d="M4 11h16v13H4z" fill="#f7dcdc" /><path d="M6 14h12M6 17h12" stroke="#d06060" /><path d="M12 20h7v3h-7z" fill="#555" /></> },
  { label: "Outlook", run: true, art: <><path d="M8 1h14v12H8z" fill="#28a8ea" /><path d="M8 1h7v6H8z" fill="#0f6cbd" /><path d="M6 11l18 0v12H6z" fill="#1490df" /><path d="M24 11L12 19l12 4z" fill="#50c8f4" /><path d="M0 6h13v13H0z" fill="#0f5fb0" /><circle cx="6.500" cy="12.500" r="3.300" stroke="#fff" strokeWidth="1.800" /></> },
  { label: "Inventor", art: <><path d="M0 0h24v24H0z" fill="#f6dfc4" /><path d="M7 2h10v4h-3v8l3 0v4H7v-4h3V6H7z" fill="#c77a22" /><path d="M7 2h10l-2 3H8z" fill="#e6a24e" /><path d="M13 21h8" stroke="#e08a28" strokeWidth="2.500" strokeDasharray="2 1" /></> },
  { label: "Plant 3D", run: true, active: true, art: <>{adsk("#f4ebe8")}<path d="M14 21h7" stroke="#d02028" strokeWidth="2.500" strokeDasharray="2 .7" /></> },
  { label: "AutoCAD", art: <>{adsk("#f4ebe8")}<path d="M16 21h5" stroke="#d02028" strokeWidth="2.500" strokeDasharray="2 .7" /></> },
  { label: "Skype", art: <><circle cx="8" cy="8" r="7" fill="#18a8f0" /><circle cx="16" cy="16" r="7" fill="#0a7ee0" /><circle cx="12" cy="12" r="10.500" fill="#0d9aee" /><path d="M16 8.500C14.500 6.500 8.500 6.500 8.500 9.300S16 11.800 16 14.800 9.500 18 8 15.500" stroke="#fff" strokeWidth="2.200" /></> },
  { label: "Notepad", art: <><path d="M2 1h19v22H2z" fill="#eef4e6" stroke="#888" /><path d="M3 12h17v10H3z" fill="#8fd83c" /><path d="M3 17h17v5H3z" fill="#4fae1a" /><path d="M6 7v9M6 12h5M11 11v3" stroke="#222" strokeWidth="1.500" /><path d="M22 2l-7 15-2 3 .5-4L20 1z" fill="#f0b429" stroke="#8a5a10" strokeWidth=".6" /></> },
  { label: "Viber", art: <><path d="M12 0q11 0 11 10.500T12 21q-1 0-3 0l-3 3v-4Q1 18 1 10.500 1 0 12 0z" fill="#fff" /><path d="M12 1.500q9.500 0 9.500 9T12 19.500H8.500L7 21.500v-3Q2.500 16.500 2.500 10.500q0-9 9.500-9z" fill="#7360f2" /><path d="M7 5.500q-2 1.500 0 5t6 5.500 3.500-1l-2.500-2-1.500 1q-3-1-4-4l1.200-1.500z" fill="#fff" /><path d="M12 5q5 .5 5 5M12.500 7.500q2 .3 2.200 2.300" stroke="#fff" /></> },
  { label: "WhatsApp", run: true, art: <><path d="M0 24l1.700-6A11.500 11.500 0 1 1 6.500 22.300z" fill="#fff" /><path d="M2 22l1.300-4.500A9.800 9.800 0 1 1 7 20.600z" fill="#2fb944" /><path d="M8 6q-2 2 0 5t6 5.500q3 .5 3.500-2.500l-3-1.500-1.500 1.500q-3-1-4-4l1-1.200L9 6z" fill="#fff" /></> },
  { label: "Settings", run: true, art: <><circle cx="12" cy="12" r="5" stroke="#fff" strokeWidth="2.500" /><circle cx="12" cy="12" r="7.500" stroke="#fff" strokeWidth="3" strokeDasharray="3 2.890" /></> },
  { label: "Paint", run: true, art: <><path d="M1 14Q1 4 13 4q9 0 9 8 0 11-11 11-5 0-4-4 1-3-2-2-4 1-4-3z" fill="#b9dcf0" stroke="#8fb8d0" strokeWidth=".6" /><circle cx="5" cy="13" r="2" fill="#e0453a" /><circle cx="8" cy="8.500" r="2" fill="#3fae49" /><circle cx="14" cy="8" r="2.200" fill="#f0a030" /><circle cx="11" cy="14" r="2.500" fill="#24303a" /><path d="M20 4L12 23" stroke="#d08a40" strokeWidth="2" /><path d="M17 1l6-1-1 5-3 2z" fill="#c9a070" /></> },
];

function Taskbar() {
  return (
    <footer className="flex h-10 shrink-0 bg-linear-to-r from-[#26211f] via-[#35201e] to-[#25212a]">
      <button aria-label="Start" className="flex w-[50px] items-center justify-center pr-[2px]">
        <Svg w={16} h={16}><path d="M0 2.500l7-1v6H0zM8 1.300L16 0v7.500H8zM0 8.500h7v6l-7-1zM8 8.500h8V16l-8-1.300z" fill="#fff" /></Svg>
      </button>
      {tasks.map((t) => (
        <button key={t.label} aria-label={t.label} className={`relative flex w-[49px] items-center justify-center border-b-[3px] border-transparent ${t.active ? "bg-[#565150]" : ""}`}>
          <Svg w={24} h={24} className="mt-[2px]">{t.art}</Svg>
          {t.run && <span className={`absolute -bottom-[3px] h-[2px] bg-[#76b9ed] ${t.active ? "inset-x-0" : "inset-x-1"}`} />}
          {t.label === "WhatsApp" && <span className="absolute bottom-[2px] right-[3px] flex h-4 w-4 items-center justify-center rounded-full border border-[#8a8a8a] bg-[#2b2b2b] text-[11px] text-white">1</span>}
        </button>
      ))}
      <div className="ml-auto flex items-center text-white">
        <button aria-label="Show hidden icons"><Svg w={12} h={7}><path d="M1 6l5-5 5 5" stroke="#fff" strokeWidth="1.400" /></Svg></button>
        <Svg w={16} h={11} className="ml-[11px]"><path d="M4 11q-4 0-4-3.500T4 4q2-4 5.500-3 2.500.5 3 3.500 3.500 0 3.500 3.300T13 11z" fill="#1488d8" /><path d="M4 11q-4 0-4-3.500T4 4l9 7z" fill="#0d64b8" /></Svg>
        <Svg w={17} h={15} className="ml-2"><path d="M4 11q-4 0-4-3.500T4 4q2-4 5.500-3 2.500.5 3 3.500 3.500 0 3.500 3.300T13 11z" fill="#1488d8" /><circle cx="12" cy="10" r="4.700" fill="#e9f3fc" /><path d="M9.500 10a2.500 2.500 0 0 1 4-2M14.500 10a2.500 2.500 0 0 1-4 2" stroke="#1670c0" strokeWidth="1.300" /></Svg>
        <Svg w={17} h={14} className="ml-[7px]"><path d="M5.500 1.500h11v8h-12M9 10v3M5 13h8M.5.500h4v4h-4zM2.500 5v8" stroke="#fff" /></Svg>
        <Svg w={17} h={14} className="ml-2"><path d="M.5 4.500h3l3-3v11l-3-3h-3z" stroke="#fff" /><path d="M9 5q1 2 0 4M11.500 3q2 4 0 8M14 1q3.500 6 0 12" stroke="#fff" /></Svg>
        <div className="ml-[6px] flex w-[66px] flex-col items-center leading-[18px]">
          <time>10:22</time>
          <time className="whitespace-nowrap">2023. 11. 20.</time>
        </div>
        <button aria-label="Notifications" className="relative ml-[17px] mr-[13px]">
          <Svg w={24} h={22}><path d="M0 1h16v13h-3l-3 4-2-4H0z" fill="#fff" /><path d="M2 4.500h12M2 7.500h12M2 10.500h12" stroke="#26211f" /></Svg>
          <span className="absolute -bottom-[3px] right-0 flex h-4 w-4 items-center justify-center rounded-full border border-[#aaa] bg-[#2b2b2b] text-[11px] font-bold">2</span>
        </button>
        <div className="h-10 w-[4px] border-l border-[#6a6668]" />
      </div>
    </footer>
  );
}

export default function App() {
  return (
    <div className="relative flex h-screen flex-col overflow-hidden bg-[#222933] font-['Open_Sans','Noto_Sans',sans-serif] text-[12px] leading-4">
      <button aria-label="Application menu" className="absolute left-px top-0 flex h-10 w-[39px] flex-col items-center border-2 border-[#d8d8d8] bg-linear-to-b from-[#c2c2c2] to-[#8b8b8b]">
        <Svg w={35} h={26}><path d="M4 26L13 1h5l8 25h-6l-2-6h-6l-2 6z" fill="#b3202a" /><path d="M4 26L13 1l3 7-5 14z" fill="#e04a50" /><path d="M9 21l9-5 2 5z" fill="#8e1820" /><path d="M29 16h6l-3 3.500z" fill="#333" /></Svg>
        <span className="text-[9px] font-bold leading-[9px] text-black">P3D</span>
      </button>
      <TitleBar />
      <MenuTabs />
      <Ribbon />
      <FileTabs />
      <div className="flex min-h-0 flex-1 border-b border-[#4a5058] bg-[#3b4453]">
        <ProjectManager />
        <Viewport />
        <ToolPalettes />
      </div>
      <LayoutTabs />
      <StatusBar />
      <Taskbar />
    </div>
  );
}
